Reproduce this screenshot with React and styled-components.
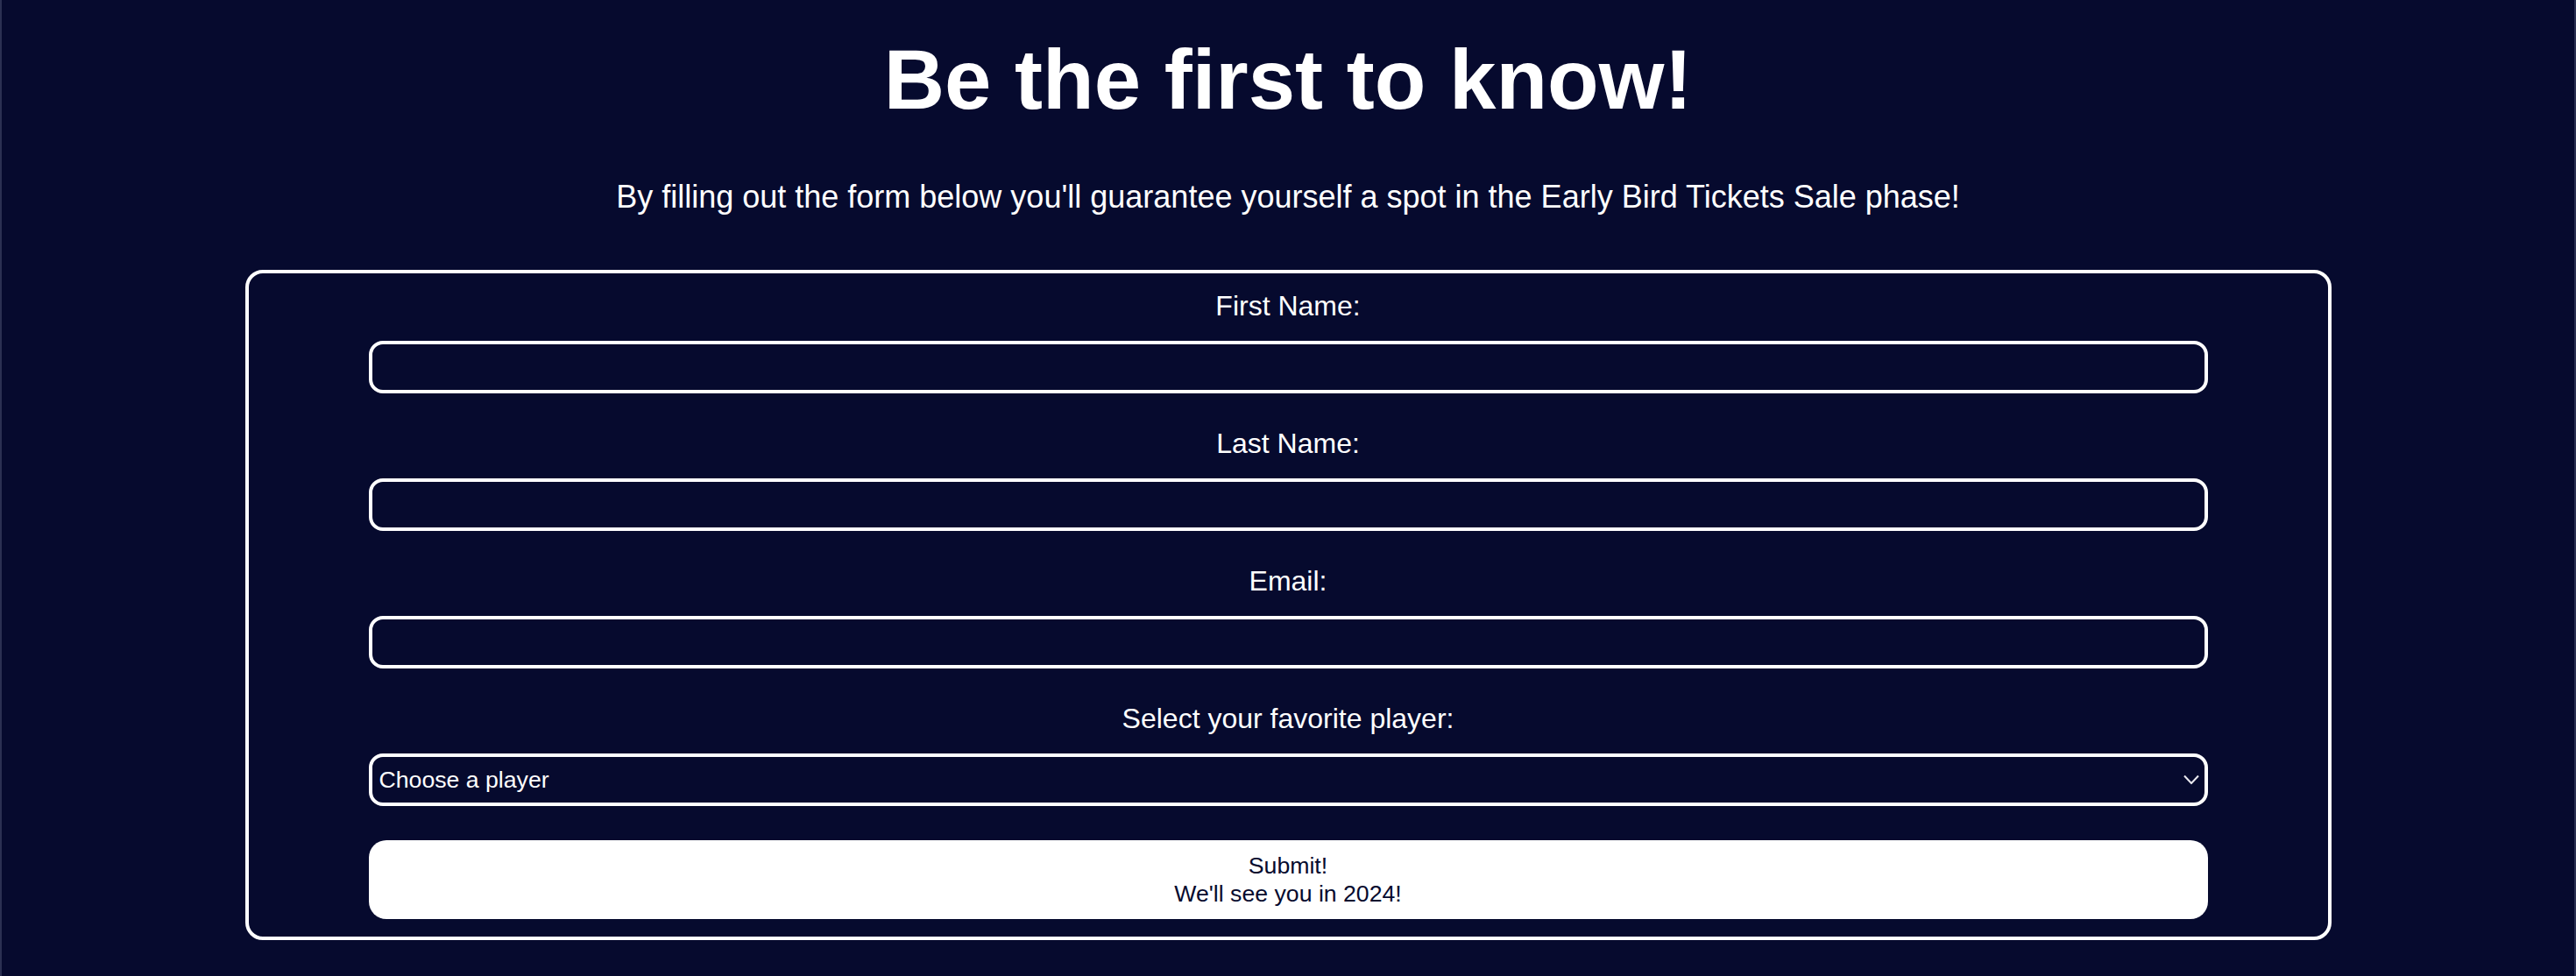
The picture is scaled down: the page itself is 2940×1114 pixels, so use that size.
import React from 'react'
import styled, { createGlobalStyle } from 'styled-components'

const GlobalStyle = createGlobalStyle`
	html, body {
		margin: 0;
		padding: 0;
		background: #060a2e;
	}

	body {
		font-family: "Liberation Sans", Arial, Helvetica, sans-serif;
		color: #fff;
	}
`

const Page = styled.main`
	min-height: 100vh;
	box-sizing: border-box;
	padding-top: 36px;
	border-left: 2px solid #2b3052;
	border-right: 2px solid #2b3052;
	background: #060a2e;
`

const Title = styled.h1`
	margin: 0;
	font-size: 96px;
	line-height: 110px;
	font-weight: 700;
	text-align: center;
	color: #fff;
`

const Subtitle = styled.p`
	margin: 58px 0 0;
	font-size: 36px;
	line-height: 41px;
	text-align: center;
	color: #fff;
`

const Form = styled.form`
	width: 2381px;
	box-sizing: border-box;
	margin: 63px auto 0;
	padding: 19px 0 20px;
	border: 4px solid #fff;
	border-radius: 20px;
	display: flex;
	flex-direction: column;
	align-items: center;
`

const Field = styled.div`
	width: 2099px;
	display: flex;
	flex-direction: column;
	align-items: center;
	margin-bottom: 39px;
`

const Label = styled.label`
	font-size: 32px;
	line-height: 37px;
	margin-bottom: 21px;
	color: #fff;
`

const Input = styled.input`
	width: 100%;
	height: 60px;
	box-sizing: border-box;
	padding: 0 8px;
	border: 4px solid #fff;
	border-radius: 16px;
	background: transparent;
	color: #fff;
	font-family: inherit;
	font-size: 26.67px;
	outline: none;
`

const SelectWrap = styled.div`
	position: relative;
	width: 100%;
`

const Select = styled.select`
	width: 100%;
	height: 60px;
	box-sizing: border-box;
	padding: 0 40px 0 8px;
	border: 4px solid #fff;
	border-radius: 16px;
	background: transparent;
	color: #fff;
	font-family: inherit;
	font-size: 26.67px;
	appearance: none;
	-webkit-appearance: none;
	outline: none;

	option {
		color: #000;
	}
`

const Chevron = styled.svg`
	position: absolute;
	right: 10px;
	top: 50%;
	transform: translateY(-50%);
	pointer-events: none;
`

const Button = styled.button`
	width: 2099px;
	height: 90px;
	border: none;
	border-radius: 20px;
	background: #fff;
	color: #060a2e;
	font-family: inherit;
	font-size: 26.67px;
	line-height: 32px;
	cursor: pointer;
`

const fields = [
	{ id: 'firstName', label: 'First Name:', type: 'text' },
	{ id: 'lastName', label: 'Last Name:', type: 'text' },
	{ id: 'email', label: 'Email:', type: 'email' },
]

export default function App() {
	return (
		<>
			<GlobalStyle />
			<Page>
				<Title>Be the first to know!</Title>
				<Subtitle>
					By filling out the form below you'll guarantee yourself a spot in the Early Bird Tickets Sale phase!
				</Subtitle>
				<Form onSubmit={e => e.preventDefault()}>
					{fields.map(f => (
						<Field key={f.id}>
							<Label htmlFor={f.id}>{f.label}</Label>
							<Input id={f.id} type={f.type} />
						</Field>
					))}
					<Field>
						<Label htmlFor="player">Select your favorite player:</Label>
						<SelectWrap>
							<Select id="player" defaultValue="">
								<option value="">Choose a player</option>
							</Select>
							<Chevron width="18" height="11" viewBox="0 0 18 11">
								<polyline points="1,1 9,9.5 17,1" fill="none" stroke="#e8e8ee" strokeWidth="2" />
							</Chevron>
						</SelectWrap>
					</Field>
					<Button type="submit">
						Submit!
						<br />
						We'll see you in 2024!
					</Button>
				</Form>
			</Page>
		</>
	)
}
